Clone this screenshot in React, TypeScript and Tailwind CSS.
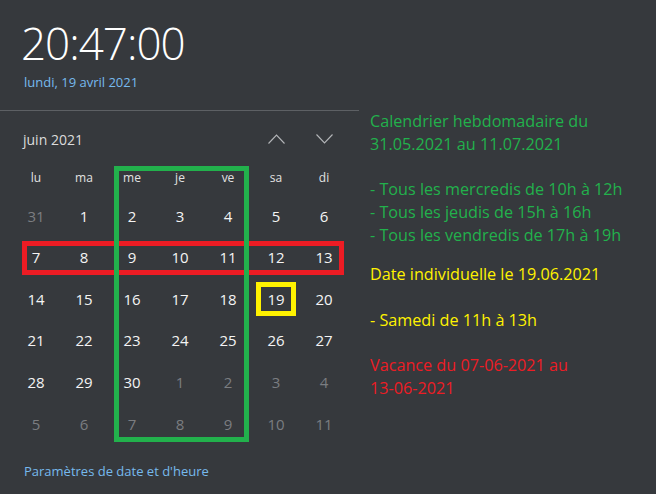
const weekdays = ['lu', 'ma', 'me', 'je', 've', 'sa', 'di'];

// juin 2021, la grille commence le lundi 31 mai
const days: { n: number; other: boolean }[] = [
  { n: 31, other: true },
  ...Array.from({ length: 30 }, (_, i) => ({ n: i + 1, other: false })),
  ...Array.from({ length: 11 }, (_, i) => ({ n: i + 1, other: true })),
];

function Chevron({ up }: { up?: boolean }) {
  return (
    <svg width="17" height="10" viewBox="0 0 17 10" fill="none">
      <path
        d={up ? 'M0.5 9.5 L8.5 1 L16.5 9.5' : 'M0.5 0.5 L8.5 9 L16.5 0.5'}
        stroke="#b4b6b9"
        strokeWidth="1.1"
      />
    </svg>
  );
}

export default function App() {
  return (
    <div
      className="flex w-[656px] h-[494px] bg-[#36393d] overflow-hidden"
      style={{ fontFamily: '"Open Sans", "Noto Sans", sans-serif' }}
    >
      {/* Volet calendrier */}
      <div className="relative w-[359px] flex flex-col">
        <div className="h-[110px] pl-[21px] pt-[21px]">
          <div className="text-[44px] leading-none font-light text-white tracking-[-1px]">20:47:00</div>
          <div className="mt-[9px] pl-[3px] text-[13px] leading-4 text-[#76b9ed]">lundi, 19 avril 2021</div>
        </div>
        <div className="h-px bg-[#5d6064]" />

        <div className="h-[56px] flex items-center pl-[23px] pr-[11px]">
          <div className="flex-1 text-[14px] text-[#dcdcdc]">juin 2021</div>
          <div className="w-[48px] flex justify-center">
            <Chevron up />
          </div>
          <div className="w-[48px] flex justify-center">
            <Chevron />
          </div>
        </div>

        <div className="pl-[12px]">
          <div className="grid grid-cols-[repeat(7,48px)] h-[22px] items-center">
            {weekdays.map((d) => (
              <div key={d} className="text-center text-[12px] text-[#e2e2e2]">
                {d}
              </div>
            ))}
          </div>
          <div className="mt-[6px] grid grid-cols-[repeat(7,48px)] auto-rows-[41.6px]">
            {days.map((d, i) => (
              <div
                key={i}
                className={`flex items-center justify-center text-[15px] ${d.other ? 'text-[#7b7d81]' : 'text-[#f4f4f4]'}`}
              >
                {d.n}
              </div>
            ))}
          </div>
        </div>

        <div className="mt-[18px] pl-[24px] text-[13px] leading-4 text-[#76b9ed]">Paramètres de date et d'heure</div>

        {/* Annotations */}
        <div className="absolute left-[22px] top-[241px] w-[322px] h-[34px] border-[5px] border-[#ed1c24]" />
        <div className="absolute left-[114px] top-[166px] w-[135px] h-[276px] border-[5px] border-[#22b14c]" />
        <div className="absolute left-[256px] top-[282px] w-[40px] h-[34px] border-[5px] border-[#fff200]" />
      </div>

      {/* Notes */}
      <div className="flex-1 pl-[11px] pt-[110px] text-[16.2px] leading-[22.7px]">
        <div className="text-[#22b14c]">
          <div>Calendrier hebdomadaire du</div>
          <div>31.05.2021 au 11.07.2021</div>
          <div className="h-[22.7px]" />
          <div>- Tous les mercredis de 10h à 12h</div>
          <div>- Tous les jeudis de 15h à 16h</div>
          <div>- Tous les vendredis de 17h à 19h</div>
        </div>
        <div className="mt-[17px] text-[#fff200]">
          <div>Date individuelle le 19.06.2021</div>
          <div className="h-[22.7px]" />
          <div>- Samedi de 11h à 13h</div>
        </div>
        <div className="mt-[22.7px] text-[#ed1c24]">
          <div>Vacance du 07-06-2021 au</div>
          <div>13-06-2021</div>
        </div>
      </div>
    </div>
  );
}
